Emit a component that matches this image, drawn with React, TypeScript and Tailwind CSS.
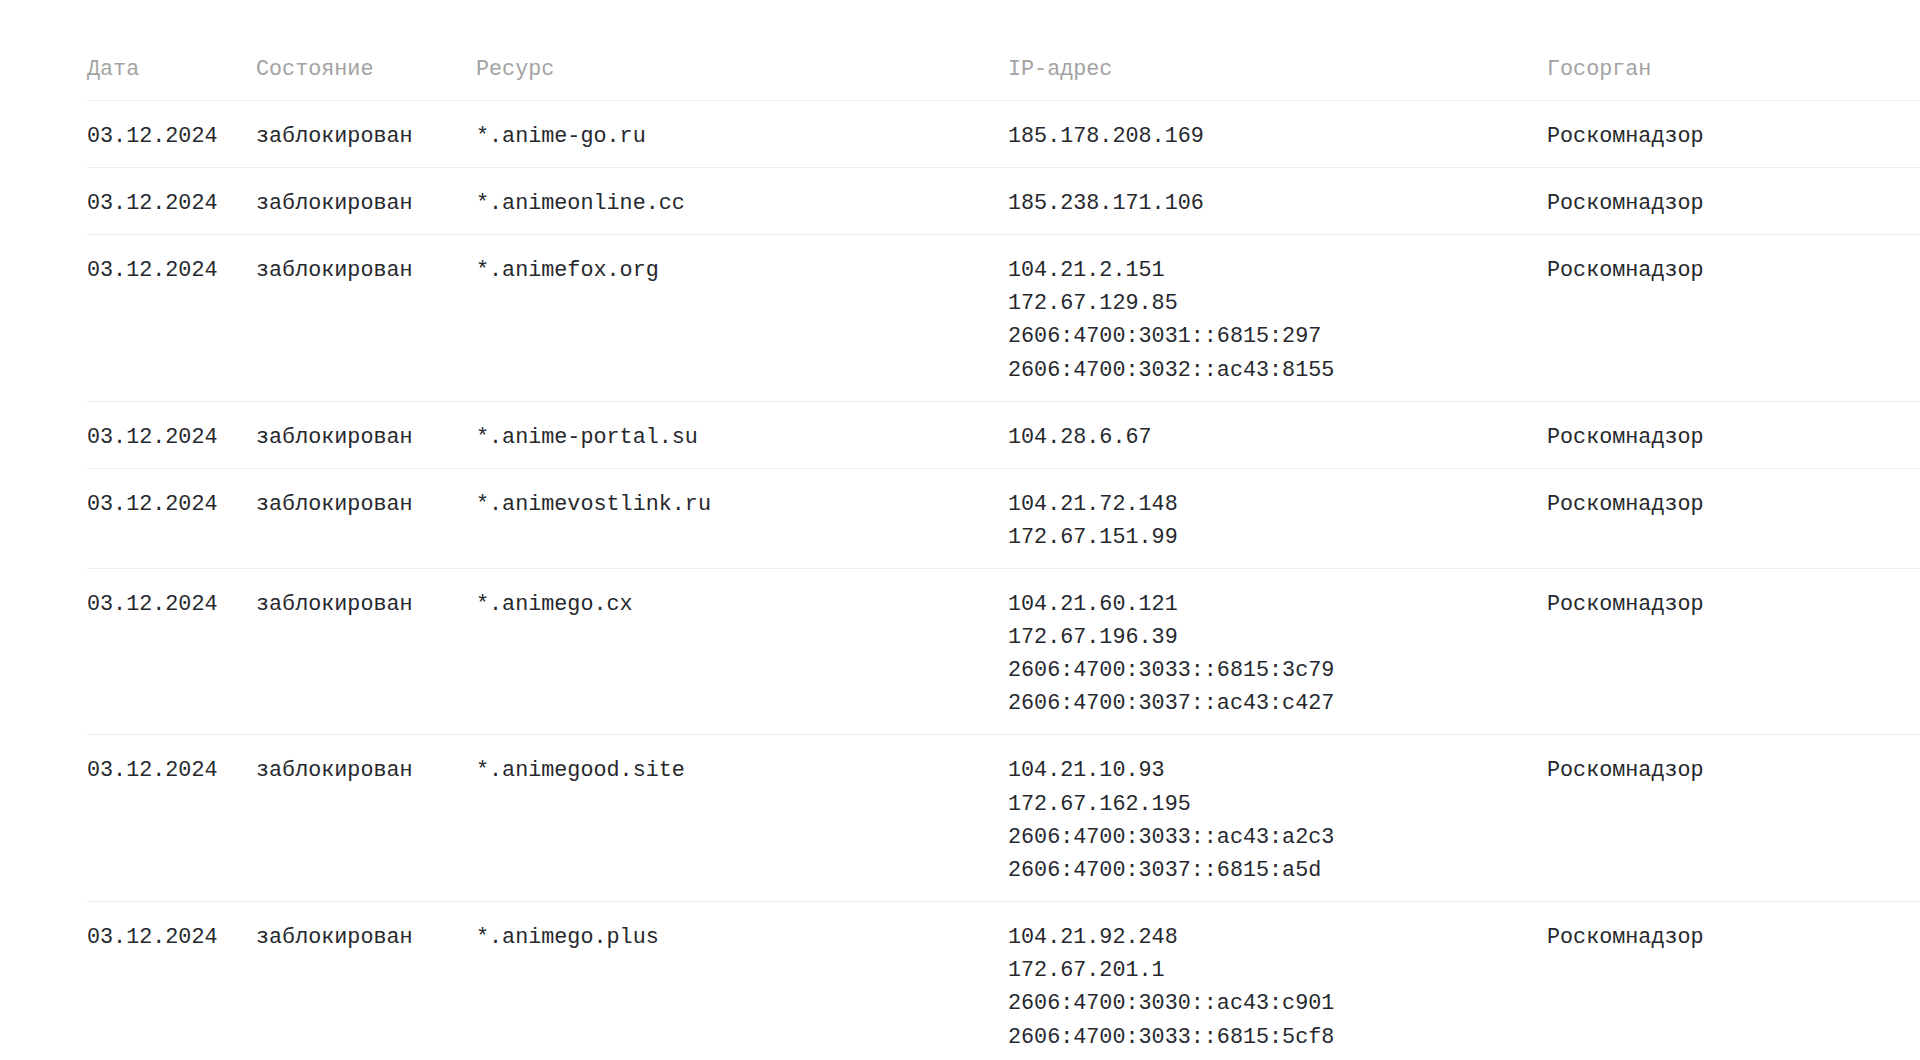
import React from "react";

type Row = {
  date: string;
  status: string;
  resource: string;
  ips: string[];
  agency: string;
};

const rows: Row[] = [
  { date: "03.12.2024", status: "заблокирован", resource: "*.anime-go.ru", ips: ["185.178.208.169"], agency: "Роскомнадзор" },
  { date: "03.12.2024", status: "заблокирован", resource: "*.animeonline.cc", ips: ["185.238.171.106"], agency: "Роскомнадзор" },
  {
    date: "03.12.2024",
    status: "заблокирован",
    resource: "*.animefox.org",
    ips: ["104.21.2.151", "172.67.129.85", "2606:4700:3031::6815:297", "2606:4700:3032::ac43:8155"],
    agency: "Роскомнадзор",
  },
  { date: "03.12.2024", status: "заблокирован", resource: "*.anime-portal.su", ips: ["104.28.6.67"], agency: "Роскомнадзор" },
  { date: "03.12.2024", status: "заблокирован", resource: "*.animevostlink.ru", ips: ["104.21.72.148", "172.67.151.99"], agency: "Роскомнадзор" },
  {
    date: "03.12.2024",
    status: "заблокирован",
    resource: "*.animego.cx",
    ips: ["104.21.60.121", "172.67.196.39", "2606:4700:3033::6815:3c79", "2606:4700:3037::ac43:c427"],
    agency: "Роскомнадзор",
  },
  {
    date: "03.12.2024",
    status: "заблокирован",
    resource: "*.animegood.site",
    ips: ["104.21.10.93", "172.67.162.195", "2606:4700:3033::ac43:a2c3", "2606:4700:3037::6815:a5d"],
    agency: "Роскомнадзор",
  },
  {
    date: "03.12.2024",
    status: "заблокирован",
    resource: "*.animego.plus",
    ips: ["104.21.92.248", "172.67.201.1", "2606:4700:3030::ac43:c901", "2606:4700:3033::6815:5cf8"],
    agency: "Роскомнадзор",
  },
];

const cols = "grid grid-cols-[169px_220px_532px_539px_1fr]";

export default function App() {
  return (
    <div className="min-h-screen bg-white pt-[34px] pl-[87px] font-['Liberation_Mono',_'DejaVu_Sans_Mono',_monospace] text-[21.75px] leading-[33.2px] overflow-hidden">
      {/* Header */}
      <div className={`${cols} pt-[19px] pb-[13.8px] text-[#a3a3a3]`}>
        <div>Дата</div>
        <div>Состояние</div>
        <div>Ресурс</div>
        <div>IP-адрес</div>
        <div>Госорган</div>
      </div>

      {/* Rows */}
      {rows.map((r, i) => (
        <div key={i} className={`${cols} border-t border-[#ededed] pt-[19px] pb-[13.8px] text-[#26282d]`}>
          <div>{r.date}</div>
          <div>{r.status}</div>
          <div>{r.resource}</div>
          <div className="flex flex-col">
            {r.ips.map((ip) => (
              <span key={ip}>{ip}</span>
            ))}
          </div>
          <div>{r.agency}</div>
        </div>
      ))}
    </div>
  );
}
